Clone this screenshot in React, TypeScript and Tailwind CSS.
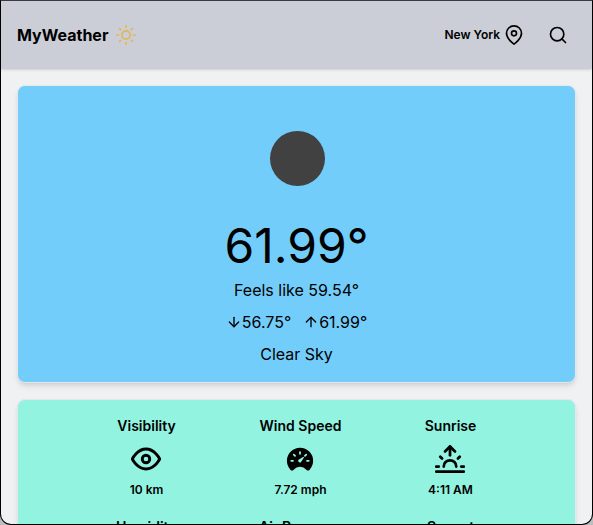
import { FiArrowDown, FiArrowUp, FiEye, FiMapPin, FiSearch, FiSun, FiSunrise, FiSunset, FiDroplet } from "react-icons/fi";
import { IoSpeedometer } from "react-icons/io5";
import { MdAir } from "react-icons/md";
import type { ReactNode } from "react";

function Detail({ title, icon, value }: { title: string; icon: ReactNode; value: string }) {
  return (
    <div className="flex h-[82px] flex-col items-center gap-2 text-xs font-semibold">
      <p className="whitespace-nowrap text-sm leading-5">{title}</p>
      <div className="mr-0.5 flex h-[30px] items-center text-3xl">{icon}</div>
      <p className="whitespace-nowrap leading-4">{value}</p>
    </div>
  );
}

export default function App() {
  return (
    <div className="h-[525px] w-[593px] overflow-hidden bg-[#bdbdbd] font-['Inter',sans-serif] text-black">
      <div className="h-[525px] overflow-hidden rounded-b-[11px] border border-black border-t-[#3b3b3f] bg-[#f0f1f3]">
        <nav className="flex h-[68px] items-center justify-between bg-[#cbced6] pr-6 pl-4 shadow-sm">
          <div className="flex items-center gap-2">
            <h1 className="text-base font-bold">MyWeather</h1>
            <FiSun className="text-xl text-[#e3b655]" />
          </div>
          <div className="flex items-center">
            <p className="text-xs font-semibold">New York</p>
            <FiMapPin className="ml-1 text-xl" />
            <FiSearch className="ml-6 text-xl" />
          </div>
        </nav>
        <main className="flex flex-col gap-4 px-4 pt-4">
          <section className="flex h-[298px] flex-col items-center rounded-lg border border-[#e5e7eb] bg-[#73cdfa] pt-[45px] shadow-md">
            <div className="ml-px size-[55px] rounded-full bg-[#414142]" />
            <p className="mt-9 text-5xl leading-12">61.99°</p>
            <p className="mt-2 leading-6">Feels like 59.54°</p>
            <div className="mt-2 flex gap-3 leading-6">
              <span className="flex items-center">
                <FiArrowDown />
                56.75°
              </span>
              <span className="flex items-center">
                <FiArrowUp />
                61.99°
              </span>
            </div>
            <p className="mt-2 leading-6">Clear Sky</p>
          </section>
          <section className="grid h-[298px] grid-cols-[60px_84px_52px] content-start justify-center gap-x-[82px] gap-y-[19px] rounded-lg border border-[#e5e7eb] bg-[#92f4e0] pt-4 shadow-md">
            <Detail title="Visibility" icon={<FiEye strokeWidth={2.3} />} value="10 km" />
            <Detail title="Wind Speed" icon={<IoSpeedometer className="size-7" strokeWidth={0} />} value="7.72 mph" />
            <Detail title="Sunrise" icon={<FiSunrise strokeWidth={2.2} />} value="4:11 AM" />
            <Detail title="Humidity" icon={<FiDroplet />} value="61%" />
            <Detail title="Air Pressure" icon={<MdAir />} value="1012 hPa" />
            <Detail title="Sunset" icon={<FiSunset />} value="7:18 PM" />
          </section>
        </main>
      </div>
    </div>
  );
}
